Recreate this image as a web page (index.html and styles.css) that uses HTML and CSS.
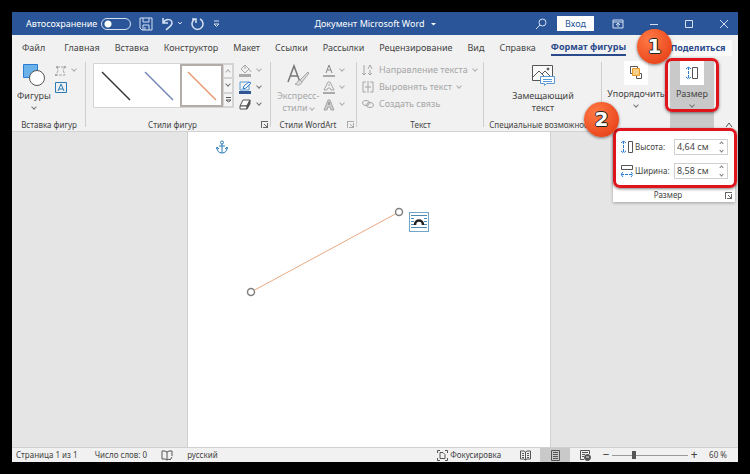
FILE: index.html
```html
<!DOCTYPE html>
<html lang="ru">
<head>
    <meta charset="UTF-8">
    <meta name="viewport" content="width=device-width, initial-scale=1.0">
    <title>Документ Microsoft Word</title>
    <link rel="stylesheet" href="styles.css">
</head>
<body>
    <div class="window">
        <header class="titlebar">
            <div class="quick-access">
                <label for="autosave">Автосохранение</label>
                <input type="checkbox" class="switch" id="autosave">
                <button aria-label="Сохранить">
                    <svg width="14" height="14" viewBox="0 0 14 14"><path d="M1 1h12v12H3l-2-2zM4 1v4h6V1M4 13V8h6v5M6 13v-3"/></svg>
                </button>
                <button aria-label="Отменить">
                    <svg width="22" height="14" viewBox="0 0 22 14"><path d="M2 1v5h5M2 6c3-5 9-4 9 0 0 3-3 4-6 7" stroke-width="1.500"/><path d="M17 5l2 2 2-2"/></svg>
                </button>
                <button aria-label="Повторить">
                    <svg width="14" height="14" viewBox="0 0 14 14"><path d="M1 2h4v4M9 2a5.500 5.500 0 1 1-5 0" stroke-width="1.500"/></svg>
                </button>
                <button aria-label="Настройка панели">
                    <svg width="7" height="8" viewBox="0 0 7 8"><path d="M1 1h5M1 4l2.500 2.500L6 4z"/></svg>
                </button>
            </div>
            <h1>Документ Microsoft Word <svg width="5" height="4" viewBox="0 0 5 4"><path d="M0 1h5L2.500 3.500z" fill="#fff" stroke="none"/></svg></h1>
            <div class="window-tools">
                <button aria-label="Поиск">
                    <svg width="12" height="12" viewBox="0 0 12 12"><circle cx="7.500" cy="4.500" r="3.500"/><path d="M5 7l-4 4"/></svg>
                </button>
                <button class="login">Вход</button>
                <button aria-label="Параметры ленты">
                    <svg width="12" height="10" viewBox="0 0 12 10"><path d="M1 1h10v8H1zM1 3h10M6 8V4M4 6l2-2 2 2"/></svg>
                </button>
                <button aria-label="Свернуть">
                    <svg width="10" height="10" viewBox="0 0 10 10"><path d="M1 5.500h8"/></svg>
                </button>
                <button aria-label="Развернуть">
                    <svg width="10" height="10" viewBox="0 0 10 10"><path d="M1.500 1.500h7v7h-7z"/></svg>
                </button>
                <button aria-label="Закрыть">
                    <svg width="10" height="10" viewBox="0 0 10 10"><path d="M1 1l8 8M9 1L1 9"/></svg>
                </button>
            </div>
        </header>

        <nav class="tabs">
            <a href="#" class="file">Файл</a>
            <a href="#">Главная</a>
            <a href="#">Вставка</a>
            <a href="#">Конструктор</a>
            <a href="#">Макет</a>
            <a href="#">Ссылки</a>
            <a href="#">Рассылки</a>
            <a href="#">Рецензирование</a>
            <a href="#">Вид</a>
            <a href="#">Справка</a>
            <a href="#" class="active">Формат фигуры</a>
            <button class="share">Поделиться</button>
        </nav>

        <div class="ribbon">
            <section class="group">
                <div class="group-body insert-body">
                    <button class="big">
                        <svg width="24" height="24" viewBox="0 0 24 24"><path d="M1.500 1.500h14v13h-14z" fill="#6cb2ea" stroke="#2b7cd3"/><circle cx="15" cy="15" r="7.500" fill="#fff"/></svg>
                        <span>Фигуры</span>
                        <i class="chev"></i>
                    </button>
                    <div class="stack">
                        <button class="small off" aria-label="Изменить фигуру">
                            <svg width="12" height="11" viewBox="0 0 12 11"><path d="M2 2h8L8 5l2 5H1l2-4z" stroke-dasharray="3 1"/><path d="M1 1h2v2H1zM9 1h2v2H9zM0 9h2v2H0z" fill="#aaa" stroke="none"/></svg>
                            <i class="chev"></i>
                        </button>
                        <button class="small" aria-label="Надпись">
                            <svg class="blue" width="12" height="11" viewBox="0 0 12 11"><path d="M.5.5h11v10H.5z"/><path d="M3 9l3-7 3 7M4 7h4"/></svg>
                        </button>
                    </div>
                </div>
                <h2>Вставка фигур</h2>
            </section>

            <section class="group">
                <div class="group-body">
                    <div class="gallery">
                        <button aria-label="Чёрная линия"><svg width="30" height="30" viewBox="0 0 30 30"><path d="M1 1l28 28" stroke="#333"/></svg></button>
                        <button aria-label="Синяя линия"><svg width="30" height="30" viewBox="0 0 30 30"><path d="M1 1l28 28" stroke="#7384b8"/></svg></button>
                        <button aria-label="Оранжевая линия" class="selected"><svg width="30" height="30" viewBox="0 0 30 30"><path d="M1 1l28 28" stroke="#e39a68"/></svg></button>
                        <div class="scroller">
                            <button aria-label="Вверх" class="off"><i class="chev up"></i></button>
                            <button aria-label="Вниз"><i class="chev"></i></button>
                            <button aria-label="Все стили"><svg width="7" height="6" viewBox="0 0 7 6"><path d="M1 .5h5M1 3h5L3.500 5z"/></svg></button>
                        </div>
                    </div>
                    <div class="stack">
                        <button class="small off" aria-label="Заливка">
                            <svg width="14" height="13" viewBox="0 0 14 13"><path d="M7 1l4 4-4 4-4-4zM7 1v4M11 5l2 3"/><path d="M1 10h12v3H1z" fill="#aaa" stroke="none"/></svg>
                            <i class="chev"></i>
                        </button>
                        <button class="small" aria-label="Контур">
                            <svg width="14" height="13" viewBox="0 0 14 13"><path d="M2 1h9v8H2z" stroke="#5b9bd5"/><path d="M5 8l1-3 5-4 2 1-5 5z" fill="#fff" stroke="#2b7cd3"/><path d="M1 10h12v3H1z" fill="#2f5597" stroke="none"/></svg>
                            <i class="chev"></i>
                        </button>
                        <button class="small" aria-label="Эффекты">
                            <svg width="14" height="13" viewBox="0 0 14 13"><path d="M5 2h7L9 8H2z" fill="#fff"/><path d="M2 8h7v3H2z" fill="#fff"/><path d="M9 8l3-6v4l-3 5z" fill="#555"/></svg>
                            <i class="chev"></i>
                        </button>
                    </div>
                </div>
                <h2 class="with-launcher">Стили фигур</h2>
                <button class="launcher" aria-label="Параметры стилей"></button>
            </section>

            <section class="group">
                <div class="group-body wordart-body off">
                    <button class="big" disabled>
                        <svg width="24" height="24" viewBox="0 0 24 24"><path d="M2 19L8 3l6 16M4 13h8" stroke="#777" stroke-width="1.500"/><path d="M22 9l-8 8 2 2 7-9zM14 17c-3 0-2 4-5 4 3 2 6 1 7-2" fill="#ddd"/></svg>
                        <span>Экспресс-<br>стили <i class="chev"></i></span>
                    </button>
                    <div class="stack">
                        <button class="small" disabled aria-label="Заливка текста">
                            <svg width="12" height="13" viewBox="0 0 12 13"><path d="M3 9l3-8 3 8M4 6h4" stroke="#888"/><path d="M0 11h12v2H0z" fill="#aaa" stroke="none"/></svg>
                            <i class="chev"></i>
                        </button>
                        <button class="small" disabled aria-label="Контур текста">
                            <svg width="12" height="13" viewBox="0 0 12 13"><path d="M1 9l4-8h2l4 8H8L7 7H5L4 9zM6 3v2"/><path d="M0 11h12v2H0z" fill="#aaa" stroke="none"/></svg>
                            <i class="chev"></i>
                        </button>
                        <button class="small" disabled aria-label="Эффекты текста">
                            <svg width="12" height="13" viewBox="0 0 12 13"><path d="M1 12l4-10h2l4 10H8l-1-3H5l-1 3z" fill="#ccc"/><path d="M6 4v3" stroke="#777"/></svg>
                            <i class="chev"></i>
                        </button>
                    </div>
                </div>
                <h2 class="with-launcher">Стили WordArt</h2>
                <button class="launcher off" aria-label="Параметры WordArt"></button>
            </section>

            <section class="group">
                <div class="group-body">
                    <div class="stack text-tools off">
                        <button class="small" disabled>
                            <svg width="12" height="12" viewBox="0 0 12 12"><path d="M2 1v10M0 9l2 2 2-2M6 5l2-4 2 4M8 6v5M6 9l2 2 2-2"/></svg>
                            Направление текста <i class="chev"></i>
                        </button>
                        <button class="small" disabled>
                            <svg width="12" height="12" viewBox="0 0 12 12"><path d="M4 1H1v10h3M8 1h3v10H8M6 0v12M3 6h6"/></svg>
                            Выровнять текст <i class="chev"></i>
                        </button>
                        <button class="small" disabled>
                            <svg width="12" height="12" viewBox="0 0 12 12"><ellipse cx="4" cy="5" rx="3.500" ry="2.500"/><ellipse cx="8" cy="7" rx="3.500" ry="2.500"/></svg>
                            Создать связь
                        </button>
                    </div>
                </div>
                <h2>Текст</h2>
            </section>

            <section class="group">
                <div class="group-body alt-body">
                    <button class="big">
                        <svg width="24" height="24" viewBox="0 0 24 24"><path d="M1.500 2.500h20v15h-20z" fill="#fafafa"/><path d="M2 14l6-6 6 6M11 11l3-3 7 7"/><circle cx="17" cy="6" r="1" fill="#555"/><path d="M9.500 13.500h14v7h-8l-2 2v-2h-4z" fill="#fff" stroke="#5b9bd5"/><path d="M12 16.500h9M12 18.500h9" stroke="#5b9bd5"/></svg>
                        <span>Замещающий<br>текст</span>
                    </button>
                </div>
                <h2>Специальные возможности</h2>
            </section>

            <section class="group plain">
                <button class="big tile">
                    <svg width="24" height="24" viewBox="0 0 24 24"><path d="M6.500 5.500h7v7h-7z" fill="#fff"/><path d="M12.500 12.500h5v5h-5z" fill="#fff"/><path d="M8.500 7.500h7v7h-7z" fill="#f8cf86" stroke="#e59a25"/></svg>
                    <span>Упорядочить</span>
                    <i class="chev"></i>
                </button>
            </section>

            <section class="group plain pressed">
                <button class="big tile">
                    <svg width="24" height="24" viewBox="0 0 24 24"><path d="M8.500 6v12M6 8l2.500-2L11 8M6 16l2.500 2 2.500-2" stroke="#2b7cd3" stroke-dasharray="3 1"/><path d="M12.500 6.500h5v11h-5z"/></svg>
                    <span>Размер</span>
                    <i class="chev"></i>
                </button>
                <div class="mark mark-button"></div>
                <div class="size-menu">
                    <div class="size-fields">
                        <label for="height">
                            <svg width="14" height="14" viewBox="0 0 14 14"><path d="M3.500 1v12M1 3l2.500-2L6 3M1 11l2.500 2L6 11" stroke="#2b7cd3" stroke-dasharray="3 1"/><path d="M8.500 1.500h4v11h-4z"/></svg>
                            Высота:
                        </label>
                        <div class="spinner">
                            <input type="text" id="height" value="4,64 см">
                            <span><i class="chev up"></i><i class="chev"></i></span>
                        </div>
                    </div>
                    <div class="size-fields">
                        <label for="width">
                            <svg width="14" height="14" viewBox="0 0 14 14"><path d="M1.500 1.500h11v4h-11z"/><path d="M1 10.500h12M3 8l-2 2.500L3 13M11 8l2 2.500-2 2.500" stroke="#2b7cd3" stroke-dasharray="3 1"/></svg>
                            Ширина:
                        </label>
                        <div class="spinner">
                            <input type="text" id="width" value="8,58 см">
                            <span><i class="chev up"></i><i class="chev"></i></span>
                        </div>
                    </div>
                    <h2 class="with-launcher">Размер</h2>
                    <button class="launcher" aria-label="Параметры размера"></button>
                    <div class="mark mark-fields"></div>
                    <b class="step step-two">2</b>
                </div>
                <b class="step step-one">1</b>
            </section>

            <button class="collapse" aria-label="Свернуть ленту">
                <svg width="8" height="6" viewBox="0 0 8 6"><path d="M1 5l3-4 3 4"/></svg>
            </button>
        </div>

        <main class="workspace">
            <div class="page">
                <svg class="anchor blue" width="12" height="14" viewBox="0 0 12 14"><circle cx="6" cy="2.500" r="1.500"/><path d="M6 4v9M3 6h6M1 8c0 3 2 5 5 5s5-2 5-5M0 9l1-2 2 2M9 9l2-2 1 2"/></svg>
                <svg class="shape" width="160" height="92" viewBox="0 0 160 92">
                    <path d="M6 86L154 6" stroke="#e9a880"/>
                    <circle cx="6" cy="86" r="3.500" fill="#fff" stroke="#808080" stroke-width="1.500"/>
                    <circle cx="154" cy="6" r="3.500" fill="#fff" stroke="#808080" stroke-width="1.500"/>
                </svg>
                <button class="layout-options" aria-label="Параметры разметки">
                    <svg width="18" height="18" viewBox="0 0 18 18"><path d="M1 2.500h16M1 5.500h3M14 5.500h3M1 8.500h3M14 8.500h3M1 11.500h3M14 11.500h3M1 14.500h16" stroke="#4a8bb5"/><path d="M5 12c0-6 8-6 8 0" stroke="#222" stroke-width="2.500"/></svg>
                </button>
            </div>
        </main>

        <footer class="statusbar">
            <span>Страница 1 из 1</span>
            <span class="words">Число слов: 0</span>
            <svg class="proof" width="12" height="11" viewBox="0 0 12 11"><path d="M6 2L4 1H1v8h3l2 1 2-1M6 2v8M6 2l2-1h3v5M8 9l1 1 2-3"/></svg>
            <span>русский</span>
            <div class="views">
                <button class="focus">
                    <svg width="11" height="11" viewBox="0 0 11 11"><path d="M3 .5H.5V3M8 .5h2.500V3M3 10.500H.5V8M8 10.500h2.500V8M3 2.500h3l2 2v4H3z"/></svg>
                    Фокусировка
                </button>
                <button class="view" aria-label="Режим чтения">
                    <svg width="11" height="11" viewBox="0 0 11 11"><path d="M5.500 2L4 1H.5v8H4l1.500 1L7 9h3.500V1H7zM5.500 2v8M2 3.500h2M2 5.500h2M2 7.500h2M7 3.500h2M7 5.500h2M7 7.500h2"/></svg>
                </button>
                <button class="view current" aria-label="Разметка страницы">
                    <svg width="11" height="11" viewBox="0 0 11 11"><path d="M1.500.5h8v10h-8zM3 2.500h5M3 4.500h5M3 6.500h5M3 8.500h5"/></svg>
                </button>
                <button class="view" aria-label="Веб-документ">
                    <svg width="11" height="11" viewBox="0 0 11 11"><path d="M4 9.500H.5v-9h9V4M2 2.500h6M2 4.500h3M2 6.500h2"/><circle cx="7.500" cy="7.500" r="3" fill="#555"/><path d="M6 7h3" stroke="#eee"/></svg>
                </button>
                <button class="zoom-step" aria-label="Уменьшить">−</button>
                <input type="range" min="0" max="100" value="28" aria-label="Масштаб">
                <button class="zoom-step" aria-label="Увеличить">+</button>
                <span class="percent">60 %</span>
            </div>
        </footer>
    </div>
</body>
</html>
```
FILE: styles.css
```css
* {
    margin: 0;
    padding: 0;
    box-sizing: border-box;
}

body {
    min-height: 100vh;
    padding: 12px;
    display: flex;
    background: #000;
    color: #444;
    font-family: "Noto Sans", "Open Sans", sans-serif;
    font-size: 9px;
    line-height: 12px;
}

button,
input {
    font: inherit;
    color: inherit;
    background: none;
    border: none;
}

a {
    color: inherit;
    text-decoration: none;
}

svg {
    display: block;
    flex: none;
    fill: none;
    stroke: #555;
}

svg.blue {
    stroke: #2b7cb5;
}

.window {
    flex: 1;
    display: flex;
    flex-direction: column;
    background: #f1f1f1;
}

/* title bar */
.titlebar {
    display: grid;
    grid-template-columns: 1fr auto 1fr;
    align-items: center;
    height: 23px;
    background: #2a5699;
    color: #fff;
}

.titlebar svg {
    stroke: #d5e1f3;
}

.quick-access,
.window-tools {
    display: flex;
    align-items: center;
}

.quick-access {
    padding-left: 14px;
    gap: 8px;
}

.quick-access label {
    margin-right: -4px;
}

.switch {
    appearance: none;
    width: 30px;
    height: 12px;
    border: 1px solid #d5e1f3;
    border-radius: 6px;
    background: radial-gradient(circle at 6px 5px, #fff 3px, transparent 4px);
}

.titlebar h1 {
    display: flex;
    align-items: center;
    gap: 6px;
    font-size: 9px;
    font-weight: 400;
}

.window-tools {
    justify-content: flex-end;
    gap: 25px;
    padding-right: 9px;
}

.login {
    margin: 0 -7px 0 -15px;
    width: 37px;
    height: 15px;
    background: #fff;
    color: #2a5699;
}

/* ribbon tabs */
.tabs {
    display: flex;
    align-items: center;
    gap: 15px;
    height: 25px;
    padding: 0 6px 0 10px;
}

.tabs .file {
    margin-right: 4px;
}

.tabs .active {
    padding: 2px 0 1px;
    border-bottom: 2px solid #2b4a8b;
    color: #2b4a8b;
    font-weight: 700;
}

.share {
    margin-left: auto;
    width: 76px;
    height: 16px;
    padding-left: 8px;
    background: #fafafa;
    color: #2b4a8b;
    font-weight: 700;
}

/* ribbon */
.ribbon {
    display: grid;
    grid-template-columns: 74px 185px 86px 127px 118px 68px 44px 1fr;
    height: 72px;
    border-bottom: 1px solid #d2d2d2;
}

.group {
    position: relative;
    display: flex;
    flex-direction: column;
    min-width: 0;
}

.group:not(.plain)::after {
    content: "";
    position: absolute;
    inset: 2px 0 4px auto;
    border-right: 1px solid #cfcfcf;
}

.group-body {
    flex: 1;
    display: flex;
    align-items: flex-start;
    gap: 4px;
    padding: 3px 5px 0;
}

.group h2,
.size-menu h2 {
    height: 12px;
    text-align: center;
    white-space: nowrap;
    font-size: 8px;
    font-weight: 400;
}

.group .with-launcher {
    padding-right: 12px;
}

.big {
    display: flex;
    flex-direction: column;
    align-items: center;
}

.big span {
    white-space: nowrap;
    margin-top: 3px;
}

.big > .chev {
    margin-top: 4px;
}

.chev {
    display: inline-block;
    flex: none;
    width: 4px;
    height: 4px;
    border: solid #777;
    border-width: 0 1px 1px 0;
    transform: translateY(-1px) rotate(45deg);
}

.chev.up {
    transform: translateY(1px) rotate(225deg);
}

.stack {
    display: flex;
    flex-direction: column;
    gap: 3px;
}

.small {
    display: flex;
    align-items: center;
    gap: 5px;
    height: 14px;
    white-space: nowrap;
}

.off {
    color: #a6a6a6;
}

.off svg {
    stroke: #a6a6a6;
}

.off .chev {
    border-color: #b0b0b0;
}

.gallery {
    display: flex;
    height: 45px;
    margin-left: 2px;
    border: 1px solid #d4d4d4;
    background: #fff;
}

.gallery > button {
    width: 43px;
    display: flex;
    align-items: center;
    justify-content: center;
}

.gallery path {
    stroke-width: 1.5px;
}

.scroller path {
    stroke-width: 1px;
}

.gallery .selected {
    border: 2px solid #b3aca8;
}

.scroller {
    display: flex;
    flex-direction: column;
    width: 10px;
    background: #f4f4f4;
}

.scroller button {
    flex: 1;
    display: flex;
    align-items: center;
    justify-content: center;
    border: 1px solid #d4d4d4;
}

.launcher {
    position: absolute;
    right: 3px;
    bottom: 3px;
    width: 7px;
    height: 7px;
    border: solid #666;
    border-width: 1px 0 0 1px;
    background: linear-gradient(#666, #666) right bottom / 5px 1px no-repeat,
        linear-gradient(#666, #666) right bottom / 1px 5px no-repeat,
        linear-gradient(45deg, transparent 42%, #666 42% 58%, transparent 58%) center / 3px 3px no-repeat;
}

.launcher.off {
    opacity: 0.5;
}

.wordart-body {
    padding-left: 6px;
}

.alt-body {
    justify-content: center;
}

.plain {
    align-items: center;
}

.tile > svg {
    background: #fff;
}

.plain .tile {
    padding-top: 1px;
}

.pressed {
    background: #c9c9c9;
}

.collapse {
    align-self: end;
    justify-self: end;
    padding: 3px 5px;
}

/* size menu */
.size-menu {
    position: absolute;
    top: 71px;
    right: -21px;
    z-index: 1;
    width: 122px;
    padding: 6px 7px 1px;
    background: #fff;
    box-shadow: 0 1px 3px rgba(0, 0, 0, 0.3);
}

.size-fields {
    display: flex;
    align-items: center;
    justify-content: space-between;
    height: 20px;
    margin-bottom: 4px;
}

.size-fields label {
    display: flex;
    align-items: center;
    gap: 1px;
    font-size: 8px;
}

.spinner {
    display: flex;
    width: 54px;
    height: 16px;
    border: 1px solid #d0d0d0;
}

.spinner input {
    flex: 1;
    min-width: 0;
    padding-left: 2px;
}

.spinner span {
    display: flex;
    flex-direction: column;
    justify-content: space-between;
    padding: 1px 4px;
}

.spinner .chev {
    width: 3px;
    height: 3px;
}

.size-menu h2 {
    margin-top: 8px;
}

/* numbered marks */
.mark {
    position: absolute;
    border: 3px solid #e0141c;
    border-radius: 7px;
    box-shadow: 0 1px 3px rgba(0, 0, 0, 0.5);
}

.mark-button {
    inset: -2px -5px 19px;
    z-index: 2;
}

.mark-fields {
    inset: -3px -2px 14px 0;
}

.step {
    position: absolute;
    z-index: 3;
    width: 35px;
    height: 35px;
    border-radius: 50%;
    background: radial-gradient(circle at 35% 30%, #ff7a45, #e8431a 80%);
    box-shadow: 0 1px 3px rgba(0, 0, 0, 0.5);
    color: #fff;
    font-family: "DejaVu Sans", sans-serif;
    font-size: 20px;
    line-height: 35px;
    text-align: center;
    text-shadow: 1px 0 #222, -1px 0 #222, 0 1px #222, 0 -1px #222;
}

.step-one {
    top: -31px;
    left: -33px;
}

.step-two {
    top: -29px;
    left: -29px;
}

/* document */
.workspace {
    flex: 1;
    display: flex;
    justify-content: center;
    padding-right: 12px;
    background: #e5e5e5;
}

.page {
    position: relative;
    width: 51%;
    border: solid #d0d0d0;
    border-width: 0 1px;
    background: #fff;
}

.anchor {
    position: absolute;
    top: 8px;
    left: 28px;
}

.shape {
    position: absolute;
    top: 74px;
    left: 57px;
}

.layout-options {
    position: absolute;
    top: 80px;
    left: 221px;
    border: 1px solid #71a6c8;
    background: #fff;
}

/* status bar */
.statusbar {
    display: flex;
    align-items: center;
    height: 15px;
    padding-left: 4px;
    border-top: 1px solid #d0d0d0;
    font-size: 8px;
}

.words {
    margin-left: 17px;
}

.proof {
    margin: 0 14px;
}

.views {
    display: flex;
    align-items: center;
    height: 100%;
    margin-left: auto;
    padding-right: 11px;
}

.focus {
    display: flex;
    align-items: center;
    gap: 2px;
    margin-right: 9px;
}

.view {
    display: flex;
    align-items: center;
    justify-content: center;
    width: 30px;
    height: 100%;
}

.view.current {
    background: #c9c9c9;
}

.zoom-step {
    width: 12px;
    font-size: 12px;
}

.views input {
    appearance: none;
    width: 76px;
    height: 9px;
    background: linear-gradient(#999, #999) center / 100% 1px no-repeat;
}

.views input::-webkit-slider-thumb {
    appearance: none;
    width: 4px;
    height: 8px;
    background: #555;
}

.percent {
    margin-left: 9px;
}
```
